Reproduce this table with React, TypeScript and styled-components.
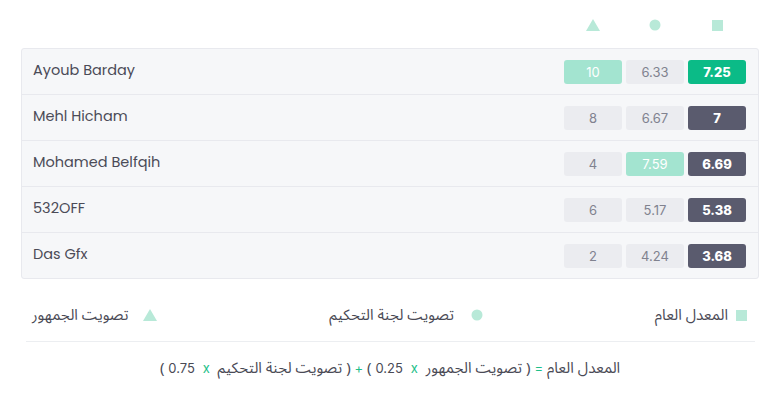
import React from "react";
import styled, { createGlobalStyle } from "styled-components";

const Global = createGlobalStyle`
  html, body { margin: 0; padding: 0; background: #ffffff; }
  body { font-family: "Inter", "Liberation Sans", sans-serif; }
`;

const Page = styled.div`
  width: 780px;
  height: 400px;
  box-sizing: border-box;
  padding: 18px 21px 0 21px;
`;

const HeaderRow = styled.div`
  display: flex;
  justify-content: flex-end;
  gap: 4px;
  padding-right: 13px;
  height: 14px;
  margin-bottom: 16px;
`;

const HeaderCell = styled.div`
  width: 58px;
  display: flex;
  align-items: center;
  justify-content: center;
`;

const Table = styled.div`
  background: #f6f7f9;
  border: 1px solid #e8e9ee;
  border-radius: 3px;
`;

const Row = styled.div<{ $last?: boolean }>`
  display: flex;
  align-items: center;
  height: 45px;
  padding: 0 12px 0 11px;
  border-bottom: ${(p) => (p.$last ? "none" : "1px solid #e8e9ee")};
`;

const Name = styled.div`
  flex: 1;
  font-family: "Poppins", "Open Sans", "Liberation Sans", sans-serif;
  font-size: 14.5px;
  color: #4b4b57;
  margin-top: -3px;
`;

const Cells = styled.div`
  display: flex;
  gap: 4px;
`;

type Tone = "grey" | "light" | "green" | "dark";

const bg: Record<Tone, string> = {
  grey: "#ebecf0",
  light: "#a3e4d0",
  green: "#0bbb87",
  dark: "#5a5b6e",
};
const fg: Record<Tone, string> = {
  grey: "#80828f",
  light: "#ffffff",
  green: "#ffffff",
  dark: "#ffffff",
};

const Cell = styled.div<{ $tone: Tone; $bold?: boolean }>`
  width: 58px;
  height: 24px;
  border-radius: 3px;
  background: ${(p) => bg[p.$tone]};
  color: ${(p) => fg[p.$tone]};
  font-size: 13px;
  font-weight: ${(p) => (p.$bold ? 800 : 400)};
  display: flex;
  align-items: center;
  justify-content: center;
`;

const Legend = styled.div`
  direction: rtl;
  display: flex;
  justify-content: space-between;
  align-items: center;
  padding: 0 12px 0 11px;
  margin-top: 26px;
  height: 20px;
`;

const LegendItem = styled.div<{ $gap: number }>`
  display: flex;
  align-items: center;
  gap: ${(p) => p.$gap}px;
`;

const arabic = `"Noto Sans Arabic", "DejaVu Sans", sans-serif`;

const ArabicText = styled.span`
  font-family: ${arabic};
  font-size: 15px;
  color: #4a4a55;
`;

const Divider = styled.div`
  height: 1px;
  background: #eceef1;
  margin: 16px 4px 0 5px;
`;

const Formula = styled.div`
  direction: rtl;
  text-align: center;
  margin-top: 10px;
  font-family: ${arabic};
  font-size: 15px;
  color: #4a4a55;
  white-space: pre;
`;

const Op = styled.bdi`
  color: #1fbf8a;
  unicode-bidi: isolate;
  font-family: "Inter", "Liberation Sans", sans-serif;
  font-size: 13px;
`;

const Num = styled.span`
  font-family: "Inter", "Liberation Sans", sans-serif;
  font-size: 13px;
`;

const ICON = "#b8e9d8";

const Triangle = () => (
  <svg width="14" height="12" viewBox="0 0 14 12">
    <polygon points="7,0 14,12 0,12" fill={ICON} />
  </svg>
);
const Circle = () => (
  <svg width="12" height="12" viewBox="0 0 12 12">
    <circle cx="6" cy="6" r="5.5" fill={ICON} />
  </svg>
);
const Square = () => (
  <svg width="11" height="11" viewBox="0 0 11 11">
    <rect width="11" height="11" fill={ICON} />
  </svg>
);

type RowData = { name: string; a: [string, Tone]; b: [string, Tone]; c: [string, Tone] };

const rows: RowData[] = [
  { name: "Ayoub Barday", a: ["10", "light"], b: ["6.33", "grey"], c: ["7.25", "green"] },
  { name: "Mehl Hicham", a: ["8", "grey"], b: ["6.67", "grey"], c: ["7", "dark"] },
  { name: "Mohamed Belfqih", a: ["4", "grey"], b: ["7.59", "light"], c: ["6.69", "dark"] },
  { name: "532OFF", a: ["6", "grey"], b: ["5.17", "grey"], c: ["5.38", "dark"] },
  { name: "Das Gfx", a: ["2", "grey"], b: ["4.24", "grey"], c: ["3.68", "dark"] },
];

export default function App() {
  return (
    <Page>
      <Global />
      <HeaderRow>
        <HeaderCell><Triangle /></HeaderCell>
        <HeaderCell><Circle /></HeaderCell>
        <HeaderCell><Square /></HeaderCell>
      </HeaderRow>
      <Table>
        {rows.map((r, i) => (
          <Row key={r.name} $last={i === rows.length - 1}>
            <Name>{r.name}</Name>
            <Cells>
              <Cell $tone={r.a[1]}>{r.a[0]}</Cell>
              <Cell $tone={r.b[1]}>{r.b[0]}</Cell>
              <Cell $tone={r.c[1]} $bold>{r.c[0]}</Cell>
            </Cells>
          </Row>
        ))}
      </Table>
      <Legend>
        <LegendItem $gap={8}>
          <Square />
          <ArabicText>المعدل العام</ArabicText>
        </LegendItem>
        <LegendItem $gap={17}>
          <Circle />
          <ArabicText>تصويت لجنة التحكيم</ArabicText>
        </LegendItem>
        <LegendItem $gap={15}>
          <Triangle />
          <ArabicText>تصويت الجمهور</ArabicText>
        </LegendItem>
      </Legend>
      <Divider />
      <Formula>
        {"المعدل العام "}<Op>=</Op>{" ( تصويت الجمهور  "}<Op>x</Op>{"  "}<Num>0.25</Num>{" ) "}<Op>+</Op>{" ( تصويت لجنة التحكيم  "}<Op>x</Op>{"  "}<Num>0.75</Num>{" )"}
      </Formula>
    </Page>
  );
}
